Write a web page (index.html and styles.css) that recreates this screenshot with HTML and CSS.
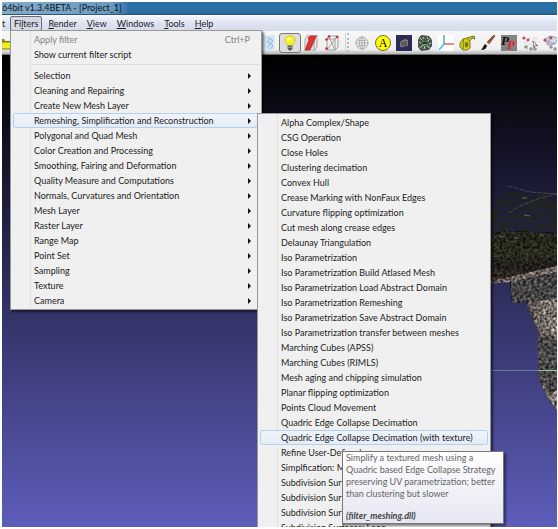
FILE: index.html
```html
<!DOCTYPE html>
<html lang="en">
<head>
<meta charset="utf-8">
<title>MeshLab_64bit v1.3.4BETA - [Project_1]</title>
<link rel="stylesheet" href="styles.css">
</head>
<body>
<div class="window">
  <header class="titlebar"><span class="glow">64bit v1.3.4BETA - [Project_1]</span></header>
  <nav class="menubar">
    <button class="menu-btn cut">t</button>
    <button class="menu-btn open">Fi<u>l</u>ters</button>
    <button class="menu-btn"><u>R</u>ender</button>
    <button class="menu-btn"><u>V</u>iew</button>
    <button class="menu-btn"><u>W</u>indows</button>
    <button class="menu-btn"><u>T</u>ools</button>
    <button class="menu-btn"><u>H</u>elp</button>
  </nav>
  <div class="toolbar">
    <button class="tool folder" aria-label="Open"><svg viewBox="0 0 16 16"><path d="M1 4h5l1 2h8v8H1z" fill="#8a8410"/><path d="M0 13l4-6h12l-3 7H1z" fill="#f2ee1a" stroke="#77700c"/></svg></button>
    <div class="tools">
      <button class="tool" aria-label="Texture"><svg viewBox="0 0 16 16"><path d="M2 1l11-1 1 14-10 2z" fill="#cfe3f2"/><path d="M6 2l3 2-3 3 4 2-4 3M9 3l3 3-3 2 3 3-3 3" fill="none" stroke="#93bddd"/></svg></button>
      <button class="tool pressed" aria-label="Light"><svg viewBox="0 0 16 16"><path d="M8 .7c3 0 5 2 5 4.700 0 2.500-2.400 3.300-2.600 5.100H5.600C5.400 8.700 3 7.900 3 5.400 3 2.700 5 .7 8 .7z" fill="#f8f318" stroke="#b7b126" stroke-width=".6"/><ellipse cx="7" cy="4" rx="2" ry="1.600" fill="#ffffb8"/><path d="M5.600 10.500h4.800v3L9 15.500H7l-1.400-2z" fill="#4d5662"/><path d="M6 12.200h4" stroke="#bcc3cb" stroke-width=".8"/></svg></button>
      <button class="tool" aria-label="Back-face culling"><svg viewBox="0 0 16 16"><path d="M2 4l3-4h9v12l-3 4H2z" fill="#e5e5e5" stroke="#888" stroke-width=".7"/><path d="M11 4v11M11 4l3-4" stroke="#888" stroke-width=".7"/><path d="M2 15L6 5 5 3l2-2h6l-1 3-5 11z" fill="#dd3434" stroke="#b52222" stroke-width=".7"/></svg></button>
      <button class="tool" aria-label="Selected faces"><svg viewBox="0 0 16 16"><path d="M3 4h8v11H3zM3 4l2-3h9v11l-3 3M11 4l3-3M3 15l8-11M5 2l6 13" fill="none" stroke="#8b8b8b" stroke-width=".8"/><g fill="#c92c31"><circle cx="2.500" cy="4.500" r="1.300"/><circle cx="5" cy="1.500" r="1.300"/><circle cx="13" cy="2" r="1.300"/><circle cx="2.500" cy="13.500" r="1.300"/></g></svg></button>
      <span class="grip"></span>
      <button class="tool" aria-label="Trackball"><svg viewBox="0 0 16 16"><g fill="none" stroke="#a2a2a2" stroke-width=".8"><circle cx="8" cy="8" r="6"/><ellipse cx="8" cy="8" rx="2.600" ry="6"/><path d="M1.500 8h13M3 5q5 1.500 10 0M3 11q5-1.500 10 0M8 1.500v13"/></g></svg></button>
      <button class="tool" aria-label="Annotation"><svg viewBox="0 0 16 16"><circle cx="8" cy="8" r="7.500" fill="#ffff0b" stroke="#4c4c12" stroke-width=".8"/><text class="letter" x="8" y="12" text-anchor="middle">A</text></svg></button>
      <button class="tool" aria-label="Ambient view"><svg viewBox="0 0 16 16"><path d="M0 0h16v16H0z" fill="#2c2b55"/><path d="M5 6l4-2 3 1v6l-6 1H4V8z" fill="#828079"/><path d="M6 7v4M8 6v5M10 6v5" stroke="#393a45"/></svg></button>
      <button class="tool" aria-label="Quality mapper"><svg viewBox="0 0 16 16"><path d="M3 1l2-1 7 1 3 4v6l-3 4-8 1-3-4V5z" fill="#4b554c"/><path d="M3 3l2 2M6 2l1 2M10 2l1 2M13 4l-2 2M2 7l2 1M14 8l-2 1M3 13l3-3M7 14l1-3M13 13l-3-2" stroke="#c9d0c7"/><path d="M5 5l3 2 3-2-1 4 2 2-4-1-3 2 1-4z" fill="#6aaa65"/><path d="M6 8h4" stroke="#1d3d24" stroke-width="2"/></svg></button>
      <button class="tool" aria-label="Axes"><svg viewBox="0 0 16 16"><path d="M0 0h16v16H0z" fill="#fff"/><path d="M6 0v9" stroke="#38a87b" stroke-width="1.300"/><path d="M6 9h10" stroke="#e44b4b" stroke-width="1.300"/><path d="M6 9l-5 6" stroke="#35c4e8" stroke-width="1.400"/></svg></button>
      <button class="tool" aria-label="Measure"><svg viewBox="0 0 16 16"><path d="M6 5C8 2 11 2 15 1l1 3-3-1-3 4z" fill="#d1cd1a" stroke="#55530f" stroke-width=".8"/><path d="M1 8l3-4 4-1 3 4v6l-3 2H4l-3-3z" fill="#d8d319" stroke="#60600f" stroke-width=".8"/><path d="M5 4c-2 3 0 6-1 10" fill="none" stroke="#77750f"/><ellipse cx="7.500" cy="9.500" rx="1.800" ry="2.800" fill="#77750f"/></svg></button>
      <button class="tool" aria-label="Paint"><svg viewBox="0 0 16 16"><path d="M14 0l1 1-6 8-2-2z" fill="#a8522a" stroke="#5b3324" stroke-width=".6"/><path d="M7 7l2 2-2 2-2-2z" fill="#d8d8d8"/><path d="M5 9l2 2c-1 3-3 4-6 4 2-2 2-4 4-6z" fill="#171717"/></svg></button>
      <button class="tool" aria-label="Pick points"><svg viewBox="0 0 16 16"><path d="M0 0h16v16H0z" fill="#838383"/><text class="pick dark" x="0" y="10">P</text><text class="pick red" x="6" y="14">P</text></svg></button>
      <button class="tool" aria-label="Select vertices"><svg viewBox="0 0 16 16"><g fill="none" stroke="#aaa" stroke-width=".7" stroke-dasharray="1 1"><path d="M2 8q5 0 6-7M3 11q8-1 9-10M5 14q9-2 9-12"/></g><g fill="#c34a50"><circle cx="2" cy="3" r="1.600"/><circle cx="6" cy="5" r="1.400"/></g><path d="M11 6l1 7 1-3 3 1z" fill="#fff" stroke="#555" stroke-width=".7"/><g fill="none" stroke="#555" stroke-width=".8"><circle cx="4" cy="12" r="1.200"/><circle cx="9" cy="14" r="1.200"/><circle cx="13" cy="14" r="1.200"/></g></svg></button>
      <button class="tool" aria-label="Select connected"><svg viewBox="0 0 16 16"><path d="M1 5l6-4 8 2-3 6-7 1zM1 5l11 4M7 1l-2 9" fill="#d5d9ee" stroke="#8589a8" stroke-width=".8"/><circle cx="2" cy="5" r="1.600" fill="#c34a50"/><circle cx="8" cy="3" r="1.400" fill="#c34a50"/><g fill="none" stroke="#555" stroke-width=".8"><circle cx="8" cy="12" r="1.200"/><circle cx="12" cy="14" r="1.200"/></g></svg></button>
    </div>
  </div>
  <main class="viewport">
    <svg class="model" viewBox="0 0 68 472" aria-hidden="true">
      <defs>
        <filter id="stone" x="0" y="0" width="1" height="1" color-interpolation-filters="sRGB">
          <feTurbulence type="fractalNoise" baseFrequency=".35" numOctaves="3" seed="4" result="n"/>
          <feColorMatrix in="n" type="matrix" values="1.300 0 0 0 -.15  1.300 0 0 0 -.15  1.300 0 0 0 -.15  0 0 0 0 1" result="g"/>
          <feComposite in="SourceGraphic" in2="g" operator="arithmetic" k1="1.900" k2=".05" k3="0" k4="0"/>
        </filter>
        <filter id="grass" x="0" y="0" width="1" height="1" color-interpolation-filters="sRGB">
          <feTurbulence type="fractalNoise" baseFrequency=".1 .5" numOctaves="3" seed="9" result="n"/>
          <feColorMatrix in="n" type="matrix" values="0 0 0 0 .13  0 0 0 0 .15  0 0 0 0 .11  5 0 0 0 -2" result="g"/>
          <feComposite in="g" in2="SourceGraphic" operator="in"/>
        </filter>
        <linearGradient id="slab" x1="0" y1="0" x2="0" y2="1"><stop offset="0" stop-color="#20251a"/><stop offset=".45" stop-color="#292b1e"/><stop offset=".7" stop-color="#211d1b"/><stop offset="1" stop-color="#393129"/></linearGradient>
        <linearGradient id="column" x1="0" y1="0" x2="1" y2="0"><stop offset="0" stop-color="#5a5350"/><stop offset="1" stop-color="#857a75"/></linearGradient>
      </defs>
      <path d="M0 150l16-14 52 3v44H0z" fill="#1a1d18" filter="url(#grass)"/>
      <path d="M0 179l18-3 50 2v37L30 222 0 227z" fill="#1d1d19"/>
      <g filter="url(#stone)">
        <path d="M0 179l18-3 50 2v37L30 222 0 227z" fill="url(#slab)"/>
        <path d="M0 227l29-7 39-9v6l-45 10-23 2z" fill="#6b625e"/>
        <path d="M21 227l47-10v30H37l-14 1z" fill="#454343"/>
        <path d="M37 247l31-3v111l-9-11-9-20-1-25 1-21-7-15z" fill="url(#column)"/>
        <path d="M49 278l19 4v52l-7 8-11-19-1-24z" fill="#4a4847"/>
      </g>
      <path d="M19 131l22 6 27 2M20 158l9-6 22-9 17-4" fill="none" stroke="#5d6560" stroke-width=".6" stroke-dasharray="5 1"/>
      <path d="M33 143h5M35 160l6 1M10 181l6 1M25 183h5M50 180h5" stroke="#686a48" stroke-width="1"/>
      <path d="M0 315.500h49" stroke="#667b92"/><path d="M49 315.500h19" stroke="#93c39b"/>
      <path d="M10 466l14 6" stroke="#77779c" stroke-width=".7"/>
    </svg>
  </main>

  <section class="popup filters">
    <button class="item disabled"><span>Apply filter</span><span class="key">Ctrl+P</span></button>
    <button class="item">Show current filter script</button>
    <hr>
    <button class="item sub">Selection</button>
    <button class="item sub">Cleaning and Repairing</button>
    <button class="item sub">Create New Mesh Layer</button>
    <button class="item sub active">Remeshing, Simplification and Reconstruction</button>
    <button class="item sub">Polygonal and Quad Mesh</button>
    <button class="item sub">Color Creation and Processing</button>
    <button class="item sub">Smoothing, Fairing and Deformation</button>
    <button class="item sub">Quality Measure and Computations</button>
    <button class="item sub">Normals, Curvatures and Orientation</button>
    <button class="item sub">Mesh Layer</button>
    <button class="item sub">Raster Layer</button>
    <button class="item sub">Range Map</button>
    <button class="item sub">Point Set</button>
    <button class="item sub">Sampling</button>
    <button class="item sub">Texture</button>
    <button class="item sub">Camera</button>
  </section>

  <section class="popup remeshing">
    <button class="item">Alpha Complex/Shape</button>
    <button class="item">CSG Operation</button>
    <button class="item">Close Holes</button>
    <button class="item">Clustering decimation</button>
    <button class="item">Convex Hull</button>
    <button class="item">Crease Marking with NonFaux Edges</button>
    <button class="item">Curvature flipping optimization</button>
    <button class="item">Cut mesh along crease edges</button>
    <button class="item">Delaunay Triangulation</button>
    <button class="item">Iso Parametrization</button>
    <button class="item">Iso Parametrization Build Atlased Mesh</button>
    <button class="item">Iso Parametrization Load Abstract Domain</button>
    <button class="item">Iso Parametrization Remeshing</button>
    <button class="item">Iso Parametrization Save Abstract Domain</button>
    <button class="item">Iso Parametrization transfer between meshes</button>
    <button class="item">Marching Cubes (APSS)</button>
    <button class="item">Marching Cubes (RIMLS)</button>
    <button class="item">Mesh aging and chipping simulation</button>
    <button class="item">Planar flipping optimization</button>
    <button class="item">Points Cloud Movement</button>
    <button class="item">Quadric Edge Collapse Decimation</button>
    <button class="item active">Quadric Edge Collapse Decimation (with texture)</button>
    <button class="item">Refine User-Defined</button>
    <button class="item">Simplfication: M</button>
    <button class="item">Subdivision Sur</button>
    <button class="item">Subdivision Sur</button>
    <button class="item">Subdivision Sur</button>
    <button class="item">Subdivision Surfaces: Loop</button>
  </section>

  <aside class="tooltip" role="tooltip">
    <p>Simplify a textured mesh using a<br>Quadric based Edge Collapse Strategy<br>preserving UV parametrization; better<br>than clustering but slower</p>
    <strong>(filter_meshing.dll)</strong>
  </aside>
</div>
</body>
</html>
```
FILE: styles.css
```css
* { box-sizing: border-box; }

body {
  margin: 0;
  padding: 2px 1px 2px 2px;
  height: 100vh;
  background: #fff;
  color: #1c1c1c;
  font: 9px/15px Lato, "Noto Sans", sans-serif;
}

button {
  margin: 0;
  padding: 0;
  border: 0;
  background: none;
  color: inherit;
  font: inherit;
  text-align: left;
  white-space: nowrap;
}

.window {
  position: relative;
  display: flex;
  flex-direction: column;
  height: 100%;
  overflow: hidden;
}

.titlebar {
  flex: none;
  height: 13px;
  line-height: 12px;
  background: linear-gradient(#2b6fa4, #2b70a8 80%, #31506b);
  color: #0b1218;
}

.glow {
  display: inline-block;
  padding-right: 8px;
  background: linear-gradient(90deg, #84abca, #6c9bc0 85%, transparent);
}

.menubar {
  flex: none;
  display: flex;
  align-items: center;
  gap: 2px;
  height: 16px;
  background: linear-gradient(#f8f9fc, #dfe4f2 50%, #d5dbed);
}

.menu-btn {
  padding: 0 3px;
  height: 15px;
  line-height: 13px;
  border: 1px solid transparent;
  border-radius: 2px;
}

.menu-btn.cut { padding: 0; width: 6px; border: 0; }
.menu-btn.open { background: #d3d8e4; border-color: #676d78; }

.toolbar {
  flex: none;
  display: flex;
  align-items: center;
  height: 24px;
  background: linear-gradient(#f7f7f7, #efefef 80%, #b5b5b5);
  border-bottom: 1px solid #707070;
}

.tools {
  flex: none;
  display: flex;
  align-items: center;
  gap: 5px;
  margin-left: 247px;
}

.tool { flex: none; width: 16px; height: 16px; }
.tool svg { display: block; width: 16px; height: 16px; }
.folder { margin-left: -4px; }

.pressed {
  width: 22px;
  height: 20px;
  margin: 0 -3px;
  padding: 1px 2px;
  border: 1px solid #777;
  border-radius: 3px;
  background: #ddd;
}

.grip {
  width: 4px;
  height: 19px;
  border-left: 1px solid #d2d2d2;
  border-right: 2px dotted #b8b8b8;
}

.letter { font: 12px "Liberation Serif", serif; }
.pick { font: italic bold 13px "Liberation Serif", serif; }
.dark { fill: #111; }
.red { fill: #e31f25; }

.viewport {
  flex: 1;
  position: relative;
  overflow: hidden;
  background: linear-gradient(#000, #5d5dbb);
}

.model {
  position: absolute;
  top: 0;
  right: 0;
  width: 68px;
  height: 472px;
}

.popup {
  position: absolute;
  display: flex;
  flex-direction: column;
  padding: 1px 2px;
  border: 1px solid #999;
  background: linear-gradient(90deg, transparent 19px, #e0e0e0 19px, #e0e0e0 20px, transparent 20px) #f0f0f0;
  box-shadow: 2px 2px 2px rgba(0, 0, 0, .55);
}

.filters { left: 8px; top: 28px; width: 252px; }
.remeshing { left: 255px; top: 111px; width: 234px; }

.item {
  flex: none;
  display: flex;
  align-items: center;
  justify-content: space-between;
  height: 15px;
  padding: 0 7px 0 20px;
  border: 1px solid transparent;
  border-radius: 2px;
}

.item.disabled { color: #838383; }
.key { padding-right: 1px; }
.item.active { background: linear-gradient(#f0f4f9, #e3ecf7); border-color: #b5d0ee; }

.sub::after {
  content: "";
  border: 3px solid transparent;
  border-left-color: #111;
  border-right: 0;
}

.popup hr {
  align-self: stretch;
  margin: 2px 0 3px 19px;
  border: 0;
  border-top: 1px solid #dadada;
}

.tooltip {
  position: absolute;
  left: 340px;
  top: 449px;
  width: 162px;
  padding: 0 3px 1px;
  border: 1px solid #777;
  background: linear-gradient(#fff, #e5e6f1);
  box-shadow: 2px 2px 2px rgba(0, 0, 0, .45);
  color: #646464;
  line-height: 12px;
}

.tooltip p { margin: 0 0 10px; white-space: nowrap; }
.tooltip strong { font-style: italic; color: #444; }
```
